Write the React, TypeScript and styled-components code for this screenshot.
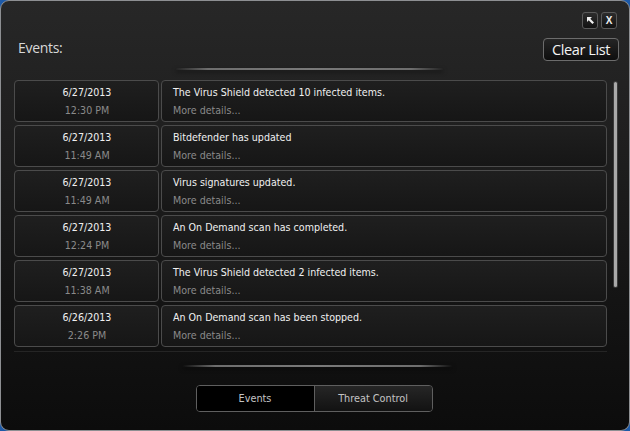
import React from "react";
import styled, { createGlobalStyle } from "styled-components";

const Global = createGlobalStyle`
  html, body { margin: 0; padding: 0; }
  body {
    width: 630px; height: 431px; overflow: hidden;
    background: #1d5aa8;
    font-family: "Liberation Sans", Arial, sans-serif;
  }
`;

const Window = styled.div`
  box-sizing: border-box;
  width: 630px;
  height: 431px;
  border: 1px solid #8d8f92;
  border-radius: 9px;
  background: linear-gradient(180deg, #272727 0%, #1e1e1e 35%, #141414 70%, #0c0c0c 100%);
  display: flex;
  flex-direction: column;
  overflow: hidden;
`;

const TopControls = styled.div`
  display: flex;
  justify-content: flex-end;
  gap: 3px;
  margin-top: 11px;
  padding-right: 12px;
`;

const WinButton = styled.div`
  box-sizing: border-box;
  width: 16px;
  height: 17px;
  border: 1px solid #5a5a5a;
  border-radius: 3px;
  background: linear-gradient(180deg, #2c2c2c, #121212);
  display: flex;
  align-items: center;
  justify-content: center;
  color: #f0f0f0;
  font: bold 10px "Liberation Sans", Arial, sans-serif;
`;

const Header = styled.div`
  display: flex;
  align-items: center;
  justify-content: space-between;
  margin-top: 9px;
  padding: 0 10px 0 17px;
  height: 23px;
`;

const Title = styled.div`
  color: #d8d8d8;
  font-size: 14px;
  font-family: "Open Sans", "Liberation Sans", sans-serif;
  letter-spacing: -0.3px;
  margin-top: -5px;
`;

const ClearButton = styled.div`
  box-sizing: border-box;
  height: 23px;
  width: 76px;
  border: 1px solid #6c6c6c;
  border-radius: 4px;
  background: linear-gradient(180deg, #252525, #0e0e0e);
  color: #f4f4f4;
  font-family: "Open Sans", "Liberation Sans", sans-serif;
  font-size: 14.5px;
  letter-spacing: -0.4px;
  display: flex;
  align-items: center;
  justify-content: center;
`;

const Divider = styled.div<{ $left: number; $width: number; $top: number }>`
  margin-top: ${(p) => p.$top}px;
  margin-left: ${(p) => p.$left}px;
  width: ${(p) => p.$width}px;
  height: 2px;
  background: linear-gradient(90deg, rgba(120,120,120,0) 0%, #6e6e6e 12%, #7a7a7a 50%, #6e6e6e 88%, rgba(120,120,120,0) 100%);
  box-shadow: 0 2px 4px rgba(0,0,0,0.5);
`;

const ListArea = styled.div`
  display: flex;
  margin-top: 10px;
  padding-left: 13px;
  height: 272px;
`;

const List = styled.div`
  width: 593px;
  display: flex;
  flex-direction: column;
  gap: 3px;
  border-bottom: 1px solid #252525;
  height: 271px;
`;

const Row = styled.div`
  display: flex;
  gap: 2px;
  height: 42px;
  flex-shrink: 0;
`;

const Cell = styled.div`
  box-sizing: border-box;
  height: 42px;
  border: 1px solid #4b4b4b;
  border-radius: 4px;
  background: linear-gradient(180deg, #1f1f1f, #161616);
  display: flex;
  flex-direction: column;
  justify-content: center;
  gap: 3px;
  font-size: 10.6px;
  font-family: "DejaVu Sans Condensed", "Liberation Sans", sans-serif;
`;

const DateCell = styled(Cell)`
  width: 145px;
  align-items: center;
  padding-left: 1px;
`;

const TextCell = styled(Cell)`
  width: 446px;
  padding-left: 11px;
`;

const Primary = styled.div`
  color: #f0f0f0;
  line-height: 15px;
`;

const Secondary = styled.div`
  color: #8a8a8a;
  line-height: 15px;
`;

const Scroll = styled.div`
  margin-left: 7px;
  margin-top: 2px;
  width: 3px;
  height: 205px;
  border-radius: 2px;
  background: #a9a9a9;
  box-shadow: 0 0 0 1px #3a3a3a;
`;

const Tabs = styled.div`
  display: flex;
  align-self: center;
  margin-top: 18px;
  margin-left: -2px;
  box-sizing: border-box;
  width: 237px;
  height: 27px;
  border: 1px solid #5f5f5f;
  border-radius: 4px;
  overflow: hidden;
`;

const Tab = styled.div<{ $active?: boolean }>`
  flex: 1;
  display: flex;
  align-items: center;
  justify-content: center;
  color: #c4c4c4;
  font-size: 10.8px;
  font-family: "DejaVu Sans Condensed", "Liberation Sans", sans-serif;
  background: ${(p) => (p.$active ? "#000" : "linear-gradient(180deg, #262626, #121212)")};
  & + & { border-left: 1px solid #5f5f5f; }
`;

const events = [
  ["6/27/2013", "12:30 PM", "The Virus Shield detected 10 infected items."],
  ["6/27/2013", "11:49 AM", "Bitdefender has updated"],
  ["6/27/2013", "11:49 AM", "Virus signatures updated."],
  ["6/27/2013", "12:24 PM", "An On Demand scan has completed."],
  ["6/27/2013", "11:38 AM", "The Virus Shield detected 2 infected items."],
  ["6/26/2013", "2:26 PM", "An On Demand scan has been stopped."],
];

export default function App() {
  return (
    <>
      <Global />
      <Window>
        <TopControls>
          <WinButton>
            <svg width="9" height="9" viewBox="0 0 9 9">
              <path d="M1 1 L6 1 L4.3 2.7 L8 6.4 L6.4 8 L2.7 4.3 L1 6 Z" fill="#eee" />
            </svg>
          </WinButton>
          <WinButton>X</WinButton>
        </TopControls>
        <Header>
          <Title>Events:</Title>
          <ClearButton>Clear List</ClearButton>
        </Header>
        <Divider $top={7} $left={175} $width={267} />
        <ListArea>
          <List>
            {events.map(([d, t, msg], i) => (
              <Row key={i}>
                <DateCell>
                  <Primary>{d}</Primary>
                  <Secondary>{t}</Secondary>
                </DateCell>
                <TextCell>
                  <Primary>{msg}</Primary>
                  <Secondary>More details...</Secondary>
                </TextCell>
              </Row>
            ))}
          </List>
          <Scroll />
        </ListArea>
        <Divider $top={13} $left={182} $width={269} />
        <Tabs>
          <Tab $active>Events</Tab>
          <Tab>Threat Control</Tab>
        </Tabs>
      </Window>
    </>
  );
}
